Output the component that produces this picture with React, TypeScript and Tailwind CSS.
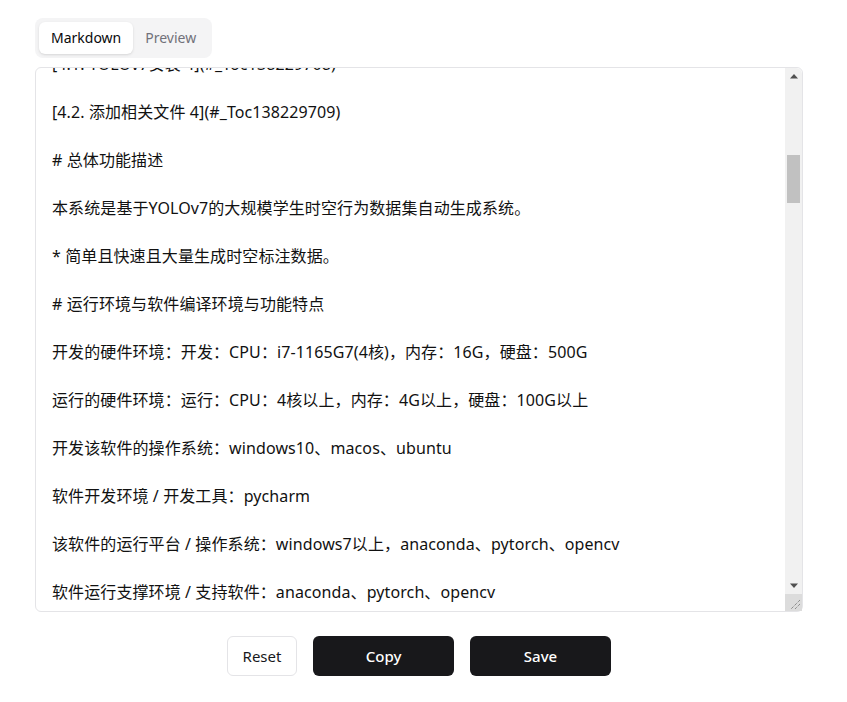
import React, { useEffect, useRef } from "react";

const before: string[] = [
  "# 基于YOLOv7的大规模学生时空行为数据集自动生成系统",
  "",
  "# 目录",
  "",
  "[1. 总体功能描述 1](#_Toc138229690)",
  "",
  "[2. 运行环境与软件编译环境与功能特点 1](#_Toc138229691)",
  "",
  "[3. 软件功能 2](#_Toc138229692)",
  "",
  "[3.1. 视频帧提取 2](#_Toc138229693)",
  "",
  "[3.2. 目标检测 2](#_Toc138229694)",
  "",
  "[3.3. 行为标注 2](#_Toc138229695)",
  "",
  "[3.4. 数据集生成 3](#_Toc138229696)",
  "",
  "[3.5. 数据导出 3](#_Toc138229697)",
  "",
  "[3.6. 可视化显示 3](#_Toc138229698)",
  "",
  "[3.7. 参数设置 3](#_Toc138229699)",
  "",
  "[3.8. 日志记录 3](#_Toc138229700)",
  "",
  "[3.9. 批量处理 3](#_Toc138229701)",
  "",
  "[3.10. 结果校验 3](#_Toc138229702)",
  "",
  "[3.11. 异常处理 4](#_Toc138229703)",
  "",
  "[4. 安装与部署 4](#_Toc138229704)",
  "",
  "[4.1. YOLOv7安装 4](#_Toc138229708)",
  "",
];

const visible: string[] = [
  "[4.2. 添加相关文件 4](#_Toc138229709)",
  "",
  "# 总体功能描述",
  "",
  "本系统是基于YOLOv7的大规模学生时空行为数据集自动生成系统。",
  "",
  "* 简单且快速且大量生成时空标注数据。",
  "",
  "# 运行环境与软件编译环境与功能特点",
  "",
  "开发的硬件环境：开发：CPU：i7-1165G7(4核)，内存：16G，硬盘：500G",
  "",
  "运行的硬件环境：运行：CPU：4核以上，内存：4G以上，硬盘：100G以上",
  "",
  "开发该软件的操作系统：windows10、macos、ubuntu",
  "",
  "软件开发环境 / 开发工具：pycharm",
  "",
  "该软件的运行平台 / 操作系统：windows7以上，anaconda、pytorch、opencv",
  "",
  "软件运行支撑环境 / 支持软件：anaconda、pytorch、opencv",
  "",
  "编程语言：python",
  "",
  "源程序量：约3000行",
  "",
];

const afterBase: string[] = [
  "# 软件功能",
  "",
  "## 视频帧提取",
  "",
  "从课堂视频中按设定的时间间隔提取关键帧，并保存为图片。",
  "",
  "## 目标检测",
  "",
  "使用YOLOv7模型检测每一帧中的学生位置，生成边界框。",
  "",
  "## 行为标注",
  "",
  "根据检测结果自动生成时空行为标注信息。",
  "",
  "## 数据集生成",
  "",
  "将标注结果整理为AVA格式的数据集文件。",
  "",
];

const after: string[] = [];
for (let i = 0; i < 9; i++) after.push(...afterBase);

const text = [...before, ...visible, ...after].join("\n");

const FONT = '"Noto Sans", "Noto Sans CJK SC", sans-serif';

export default function App() {
  const ref = useRef<HTMLTextAreaElement>(null);
  useEffect(() => {
    if (ref.current) {
      ref.current.scrollTop = before.length * 24 - 16;
    }
  }, []);
  return (
    <div className="min-h-[702px] bg-white" style={{ fontFamily: FONT }}>
      <div className="ml-[35px] w-[768px] pt-[18px]">
        <div className="inline-flex h-10 items-center rounded-lg bg-[#f4f4f5] p-1">
          <button className="h-8 rounded-md bg-white px-3 text-sm text-[#09090b] shadow-sm">
            Markdown
          </button>
          <button className="h-8 px-3 text-sm text-[#71717a]">Preview</button>
        </div>
        <div className="relative mt-[9px] h-[545px]">
          <textarea
            ref={ref}
            defaultValue={text}
            spellCheck={false}
            className="block h-full w-full resize-none overflow-hidden rounded-md border border-[#e4e4e7] bg-white py-4 pl-4 pr-[33px] text-base leading-6 tracking-[0.1px] text-[#111111] outline-none"
            style={{ fontFamily: FONT }}
          />
          <div className="absolute bottom-px right-px top-px flex w-[17px] flex-col overflow-hidden rounded-tr-md bg-[#f1f1f1]">
            <div className="flex h-[17px] items-center justify-center">
              <svg width="8" height="5" viewBox="0 0 8 5">
                <polygon points="4,0 8,4.5 0,4.5" fill="#505050" />
              </svg>
            </div>
            <div className="relative flex-1">
              <div className="absolute left-[2px] right-[2px] top-[70px] h-[48px] bg-[#c1c1c1]" />
            </div>
            <div className="flex h-[17px] items-center justify-center">
              <svg width="8" height="5" viewBox="0 0 8 5">
                <polygon points="0,0.5 8,0.5 4,5" fill="#505050" />
              </svg>
            </div>
            <div className="flex h-[17px] items-end justify-end bg-[#dcdcdc]">
              <svg width="17" height="17" viewBox="0 0 17 17">
                <line x1="15" y1="6" x2="6" y2="15" stroke="#6b6b6b" strokeWidth="1" strokeDasharray="1 1" />
                <line x1="15" y1="10" x2="10" y2="15" stroke="#6b6b6b" strokeWidth="1" strokeDasharray="1 1" />
              </svg>
            </div>
          </div>
        </div>
        <div className="mt-6 flex justify-center gap-4">
          <button className="h-10 w-[70px] rounded-md border border-[#e4e4e7] bg-white text-[15px] text-[#18181b]">
            Reset
          </button>
          <button className="h-10 w-[141px] rounded-md bg-[#18181b] text-[15px] font-medium text-white">
            Copy
          </button>
          <button className="h-10 w-[141px] rounded-md bg-[#18181b] text-[15px] font-medium text-white">
            Save
          </button>
        </div>
      </div>
    </div>
  );
}
